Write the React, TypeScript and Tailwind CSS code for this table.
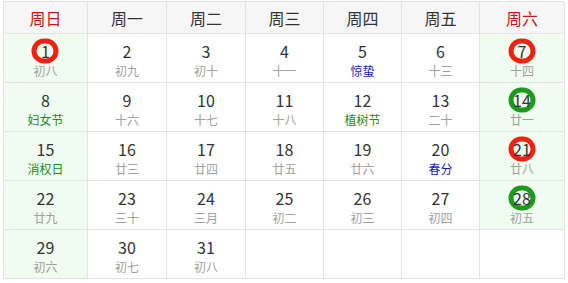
const heads = ["周日", "周一", "周二", "周三", "周四", "周五", "周六"];

type Day = { n?: number; sub?: string; tone?: "green" | "blue"; ring?: "red" | "green" };

const days: Day[] = [
  { n: 1, sub: "初八", ring: "red" },
  { n: 2, sub: "初九" },
  { n: 3, sub: "初十" },
  { n: 4, sub: "十一" },
  { n: 5, sub: "惊蛰", tone: "blue" },
  { n: 6, sub: "十三" },
  { n: 7, sub: "十四", ring: "red" },
  { n: 8, sub: "妇女节", tone: "green" },
  { n: 9, sub: "十六" },
  { n: 10, sub: "十七" },
  { n: 11, sub: "十八" },
  { n: 12, sub: "植树节", tone: "green" },
  { n: 13, sub: "二十" },
  { n: 14, sub: "廿一", ring: "green" },
  { n: 15, sub: "消权日", tone: "green" },
  { n: 16, sub: "廿三" },
  { n: 17, sub: "廿四" },
  { n: 18, sub: "廿五" },
  { n: 19, sub: "廿六" },
  { n: 20, sub: "春分", tone: "blue" },
  { n: 21, sub: "廿八", ring: "red" },
  { n: 22, sub: "廿九" },
  { n: 23, sub: "三十" },
  { n: 24, sub: "三月" },
  { n: 25, sub: "初二" },
  { n: 26, sub: "初三" },
  { n: 27, sub: "初四" },
  { n: 28, sub: "初五", ring: "green" },
  { n: 29, sub: "初六" },
  { n: 30, sub: "初七" },
  { n: 31, sub: "初八" },
  {},
  {},
  {},
  {},
];

function Cell({ d, i }: { d: Day; i: number }) {
  const col = i % 7;
  const weekend = d.n !== undefined && (col === 0 || col === 6);
  const subColor =
    d.tone === "green" ? "text-[#1f8a1f]" : d.tone === "blue" ? "text-[#1a1ab0]" : "text-[#a0a0a0]";
  return (
    <div
      className={`flex h-[49px] flex-col items-center border-r border-b border-[#e3e3e3] pt-[5px] ${
        weekend ? "bg-[#effcef]" : "bg-white"
      }`}
    >
      {d.n !== undefined && (
        <>
          <div className="relative flex h-[24px] items-center justify-center">
            {d.ring && (
              <span
                className={`absolute left-1/2 top-1/2 h-[25px] w-[27px] -translate-x-1/2 -translate-y-1/2 rounded-full border-[5px] ${
                  d.ring === "red" ? "border-[#ee2211]" : "border-[#1c9a1c]"
                }`}
              />
            )}
            <span className="relative text-[16px] leading-none text-[#333]">{d.n}</span>
          </div>
          <div className={`mt-[2px] text-[12px] leading-none ${subColor}`}>{d.sub}</div>
        </>
      )}
    </div>
  );
}

export default function App() {
  return (
    <div className="h-[283px] w-[568px] bg-white pl-[3px] pt-[1px] font-['Noto_Sans_CJK_SC','Noto_Sans',sans-serif]">
      <div className="grid w-[561px] grid-cols-[84px_79px_79px_78px_78px_78px_85px] border-t border-l border-[#e3e3e3]">
        {heads.map((h, i) => (
          <div
            key={h}
            className={`flex h-[32px] items-center justify-center border-r border-b border-[#e3e3e3] bg-[#f6f6f6] text-[16px] ${
              i === 0 || i === 6 ? "text-[#c81818]" : "text-[#333]"
            }`}
          >
            {h}
          </div>
        ))}
        {days.map((d, i) => (
          <Cell key={i} d={d} i={i} />
        ))}
      </div>
    </div>
  );
}
